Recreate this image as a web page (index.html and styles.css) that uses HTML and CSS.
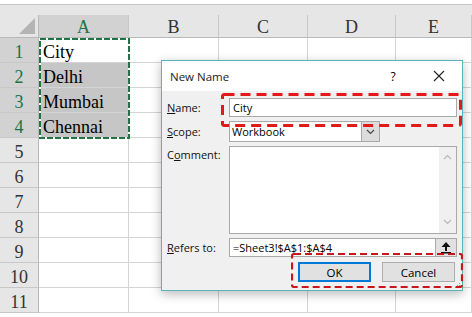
FILE: index.html
```html
<!DOCTYPE html>
<html lang="en">
<head>
  <meta charset="UTF-8" />
  <meta name="viewport" content="width=device-width, initial-scale=1" />
  <title>New Name - Excel</title>
  <link rel="stylesheet" href="styles.css">
</head>
<body>
  <div class="sheet">
    <div class="top-strip"></div>
    <div class="grid">
      <div class="hd corner"><span class="corner-tri"></span></div>
      <div class="hd col sel-hd">A</div>
      <div class="hd col">B</div>
      <div class="hd col">C</div>
      <div class="hd col">D</div>
      <div class="hd col">E</div>

      <div class="hd row sel-hd">1</div><div class="cell">City</div><div class="cell"></div><div class="cell"></div><div class="cell"></div><div class="cell"></div>
      <div class="hd row sel-hd">2</div><div class="cell sel">Delhi</div><div class="cell"></div><div class="cell"></div><div class="cell"></div><div class="cell"></div>
      <div class="hd row sel-hd">3</div><div class="cell sel">Mumbai</div><div class="cell"></div><div class="cell"></div><div class="cell"></div><div class="cell"></div>
      <div class="hd row sel-hd">4</div><div class="cell sel">Chennai</div><div class="cell"></div><div class="cell"></div><div class="cell"></div><div class="cell"></div>
      <div class="hd row">5</div><div class="cell"></div><div class="cell"></div><div class="cell"></div><div class="cell"></div><div class="cell"></div>
      <div class="hd row">6</div><div class="cell"></div><div class="cell"></div><div class="cell"></div><div class="cell"></div><div class="cell"></div>
      <div class="hd row">7</div><div class="cell"></div><div class="cell"></div><div class="cell"></div><div class="cell"></div><div class="cell"></div>
      <div class="hd row">8</div><div class="cell"></div><div class="cell"></div><div class="cell"></div><div class="cell"></div><div class="cell"></div>
      <div class="hd row">9</div><div class="cell"></div><div class="cell"></div><div class="cell"></div><div class="cell"></div><div class="cell"></div>
      <div class="hd row">10</div><div class="cell"></div><div class="cell"></div><div class="cell"></div><div class="cell"></div><div class="cell"></div>
      <div class="hd row">11</div><div class="cell"></div><div class="cell"></div><div class="cell"></div><div class="cell"></div><div class="cell"></div>
    </div>
  </div>

  <!-- copy marquee around A1:A4 -->
  <svg class="ants" width="91" height="101" viewBox="0 0 91 101">
    <rect x="1" y="1" width="89" height="99" fill="none" stroke="#ffffff" stroke-width="2" />
    <rect x="1" y="1" width="89" height="99" fill="none" stroke="#217346" stroke-width="2" stroke-dasharray="6 2" />
  </svg>

  <div class="dialog">
    <div class="dlg-title">
      <span class="dlg-caption">New Name</span>
      <span class="dlg-help">?</span>
      <span class="dlg-close">
        <svg width="12" height="12" viewBox="0 0 12 12"><path d="M1 1 L11 11 M11 1 L1 11" stroke="#222" stroke-width="1.1" fill="none" /></svg>
      </span>
    </div>
    <div class="dlg-body">
      <div class="form">
        <label class="lbl"><u>N</u>ame:</label>
        <div class="field">City</div>

        <label class="lbl"><u>S</u>cope:</label>
        <div class="select">
          <span class="select-text">Workbook</span>
          <span class="drop">
            <svg width="9" height="6" viewBox="0 0 9 6"><path d="M1 1 L4.5 4.5 L8 1" stroke="#444" stroke-width="1.1" fill="none" /></svg>
          </span>
        </div>

        <label class="lbl lbl-top">C<u>o</u>mment:</label>
        <div class="memo">
          <div class="memo-text"></div>
          <div class="vscroll">
            <svg width="9" height="6" viewBox="0 0 9 6"><path d="M1 5 L4.5 1.5 L8 5" stroke="#b8b8b8" stroke-width="1.2" fill="none" /></svg>
            <svg width="9" height="6" viewBox="0 0 9 6"><path d="M1 1 L4.5 4.5 L8 1" stroke="#b8b8b8" stroke-width="1.2" fill="none" /></svg>
          </div>
        </div>

        <label class="lbl"><u>R</u>efers to:</label>
        <div class="refers">
          <div class="field refers-field">=Sheet3!$A$1:$A$4</div>
          <span class="collapse">
            <svg width="14" height="14" viewBox="0 0 14 14">
              <path d="M7 1 L2.5 6 L11.5 6 Z" fill="#111" />
              <rect x="6" y="5.5" width="2" height="4.5" fill="#111" />
              <rect x="2" y="11" width="10" height="1.5" fill="#111" />
            </svg>
          </span>
        </div>
      </div>
      <div class="buttons">
        <button class="btn btn-ok">OK</button>
        <button class="btn">Cancel</button>
      </div>
    </div>
    <svg class="grip" width="8" height="8" viewBox="0 0 8 8">
      <rect x="6" y="2" width="1" height="1" fill="#9a9a9a" />
      <rect x="4" y="4" width="1" height="1" fill="#9a9a9a" />
      <rect x="6" y="4" width="1" height="1" fill="#9a9a9a" />
      <rect x="2" y="6" width="1" height="1" fill="#9a9a9a" />
      <rect x="4" y="6" width="1" height="1" fill="#9a9a9a" />
      <rect x="6" y="6" width="1" height="1" fill="#9a9a9a" />
    </svg>
  </div>

  <!-- red callouts -->
  <svg class="mark mark-name" width="241" height="34" viewBox="0 0 241 34">
    <rect x="1.5" y="1.5" width="238" height="31" rx="2" fill="none" stroke="#e2181b" stroke-width="3" stroke-dasharray="10 6" />
  </svg>
  <svg class="mark mark-buttons" width="172" height="35" viewBox="0 0 172 35">
    <rect x="1" y="1" width="170" height="33" rx="2" fill="none" stroke="#c8161b" stroke-width="2.2" stroke-dasharray="7 4" />
  </svg>
</body>
</html>
```

FILE: styles.css
```css
body {
  margin: 0;
  padding: 0;
  background-color: #ffffff;
  font-family: "Liberation Serif", serif;
  overflow: hidden;
}
.sheet {
  padding-top: 4px;
}
.top-strip {
  height: 10px;
  background-color: #e6e6e6;
  border-top: 1px solid #c6c6c6;
}
.grid {
  display: grid;
  grid-template-columns: 39px 90px 90px 89px 88px 1fr;
  grid-template-rows: 23px repeat(11, 25px);
}
.hd {
  background-color: #e6e6e6;
  color: #333;
  font-size: 18px;
  display: flex;
  align-items: center;
  justify-content: center;
  box-sizing: border-box;
  border-right: 1px solid #c8c8c8;
  border-bottom: 1px solid #c8c8c8;
}
.hd.col {
  padding-top: 3px;
  border-bottom-color: #b8b8b8;
}
.hd.row {
  padding-top: 5px;
  border-right-color: #b8b8b8;
}
.corner {
  position: relative;
  border-bottom-color: #b8b8b8;
  border-right-color: #b8b8b8;
}
.corner-tri {
  position: absolute;
  right: 3px;
  bottom: 3px;
  width: 0;
  height: 0;
  border-left: 16px solid transparent;
  border-bottom: 16px solid #b4b4b4;
}
.sel-hd {
  background-color: #d2d2d2;
  color: #217346;
}
.cell {
  box-sizing: border-box;
  border-right: 1px solid #d4d4d4;
  border-bottom: 1px solid #d4d4d4;
  font-size: 18px;
  color: #000;
  padding: 5px 0 0 4px;
  display: flex;
  align-items: center;
}
.cell.sel {
  background-color: #c6c6c6;
}
.ants {
  position: absolute;
  left: 39px;
  top: 38px;
}

.dialog {
  position: absolute;
  left: 161px;
  top: 60px;
  width: 302px;
  height: 231px;
  box-sizing: border-box;
  border: 1px solid #5bb5b8;
  background-color: #f0f0f0;
  box-shadow: 0 3px 10px rgba(0, 0, 0, 0.28);
  font-family: "Open Sans", sans-serif;
  font-size: 11px;
  color: #000;
  display: flex;
  flex-direction: column;
}
.dlg-title {
  height: 30px;
  background-color: #ffffff;
  display: flex;
  align-items: center;
  padding-left: 8px;
}
.dlg-caption {
  flex: 1;
  font-size: 11.5px;
  color: #222;
}
.dlg-help {
  width: 14px;
  text-align: center;
  margin-right: 16px;
  font-size: 12px;
}
.dlg-close {
  width: 46px;
  display: flex;
  justify-content: center;
  align-items: center;
}
.dlg-body {
  flex: 1;
  display: flex;
  flex-direction: column;
}
.form {
  display: grid;
  grid-template-columns: 62px 1fr;
  grid-template-rows: 19px 21px 88px 19px;
  row-gap: 4px;
  padding: 7px 5px 0 5px;
}
.lbl {
  display: flex;
  align-items: center;
  color: #111;
}
.lbl-top {
  align-items: flex-start;
  padding-top: 1px;
}
.field {
  background-color: #ffffff;
  border: 1px solid #a9a9a9;
  box-sizing: border-box;
  padding-left: 3px;
  display: flex;
  align-items: center;
  white-space: nowrap;
  overflow: hidden;
}
.select {
  width: 151px;
  background-color: #ffffff;
  border: 1px solid #a9a9a9;
  box-sizing: border-box;
  display: flex;
}
.select-text {
  flex: 1;
  padding-left: 2px;
  display: flex;
  align-items: center;
}
.drop {
  width: 17px;
  background-color: #dcdcdc;
  border-left: 1px solid #a9a9a9;
  display: flex;
  align-items: center;
  justify-content: center;
}
.memo {
  background-color: #ffffff;
  border: 1px solid #a9a9a9;
  box-sizing: border-box;
  display: flex;
}
.memo-text {
  flex: 1;
}
.vscroll {
  width: 17px;
  background-color: #f0f0f0;
  display: flex;
  flex-direction: column;
  justify-content: space-between;
  align-items: center;
  padding: 7px 0 8px 0;
}
.refers {
  display: flex;
}
.refers-field {
  flex: 1;
}
.collapse {
  width: 21px;
  box-sizing: border-box;
  background-color: #e1e1e1;
  border: 1px solid #a9a9a9;
  border-left: none;
  display: flex;
  align-items: center;
  justify-content: center;
}
.buttons {
  display: flex;
  justify-content: flex-end;
  gap: 11px;
  padding: 5px 7px 0 0;
}
.btn {
  width: 73px;
  height: 20px;
  box-sizing: border-box;
  background-color: #e1e1e1;
  border: 1px solid #adadad;
  font-family: "Open Sans", sans-serif;
  font-size: 11.5px;
  color: #000;
  padding: 0;
}
.btn-ok {
  border: 2px solid #0078d7;
}
.grip {
  position: absolute;
  right: 1px;
  bottom: 1px;
}
.mark {
  position: absolute;
}
.mark-name {
  left: 221px;
  top: 93px;
}
.mark-buttons {
  left: 291px;
  top: 253px;
}
```
